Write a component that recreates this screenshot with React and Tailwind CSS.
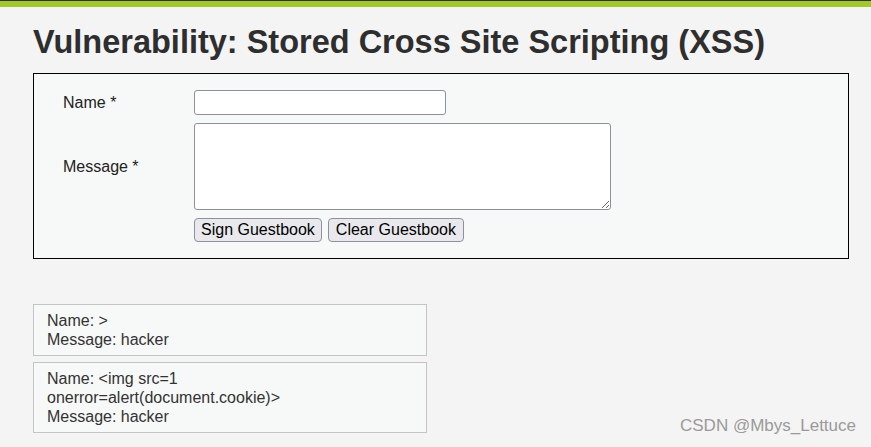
import React from "react";

const entries = [
  { name: ">", message: "hacker" },
  { name: "<img src=1 onerror=alert(document.cookie)>", message: "hacker" },
];

const btn =
  "h-[24px] px-[6px] bg-[#e9e9ed] border border-[#8f8f9d] rounded-[4px] text-[16px] leading-none text-black";

export default function App() {
  return (
    <div className="relative min-h-[447px] bg-[#f4f4f4] font-['Liberation_Sans',Arial,sans-serif] overflow-hidden">
      <div className="h-[1px] bg-[#333333]" />
      <div className="h-[6px] bg-[#a3c82e]" />

      <div className="px-[33px]">
        <h1 className="mt-[15px] text-[32.5px] leading-[40px] font-bold text-[#2e2e2e]">
          Vulnerability: Stored Cross Site Scripting (XSS)
        </h1>

        <div className="mt-[11px] w-[816px] border border-black bg-[#f7f8f8] pt-[16px] pb-[16px] pl-[29px]">
          <div className="grid grid-cols-[131px_auto] gap-y-[8px] items-center text-[16px] text-[#222]">
            <label>Name *</label>
            <input type="text" className="w-[252px] h-[25px] bg-white border border-[#8f8f9d] rounded-[3px]" />
            <label>Message *</label>
            <textarea className="block w-[417px] h-[87px] bg-white border border-[#8f8f9d] rounded-[3px] resize" />
            <div />
            <div className="flex gap-[6px]">
              <button className={btn}>Sign Guestbook</button>
              <button className={btn + " px-[7px]"}>Clear Guestbook</button>
            </div>
          </div>
        </div>

        <div className="mt-[45px] flex flex-col gap-[6px] w-[394px]">
          {entries.map((e, i) => (
            <div key={i} className="border border-[#c4c4c4] bg-[#f7f8f8] pt-[6px] pb-[6px] pl-[13px] pr-[20px] text-[16px] leading-[19px] text-[#333]">
              <div>Name: {e.name}</div>
              <div>Message: {e.message}</div>
            </div>
          ))}
        </div>
      </div>

      <div className="absolute right-[15px] bottom-[9px] text-[17px] text-[#9a9a9a]">
        CSDN @Mbys_Lettuce
      </div>
    </div>
  );
}
